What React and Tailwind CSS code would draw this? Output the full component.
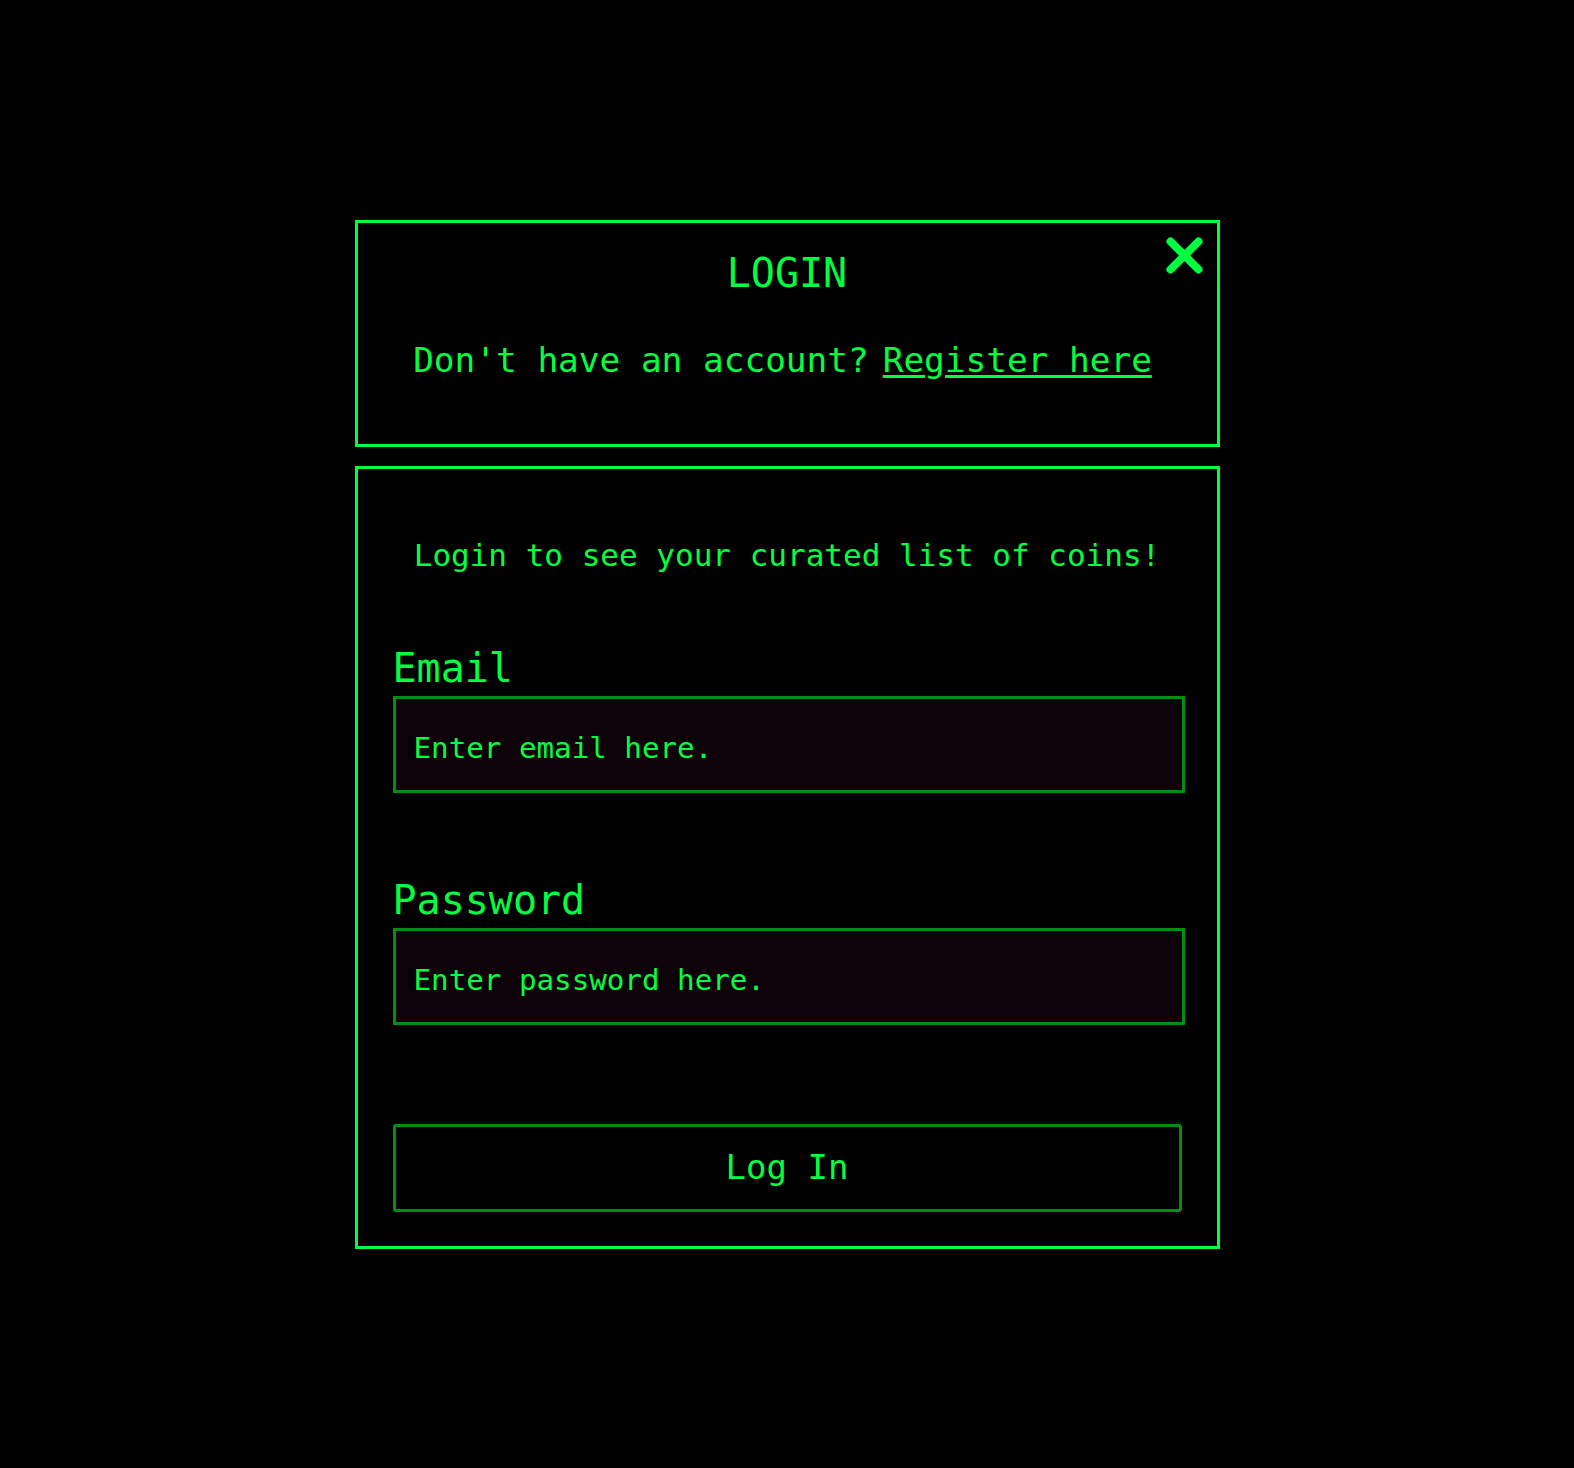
import { useState } from 'react'

const mono = { fontFamily: '"DejaVu Sans Mono", monospace' }

function CloseIcon() {
  return (
    <svg width="37" height="37" viewBox="0 0 37 37" fill="none">
      <path d="M4.5 4.5 L32.5 32.5 M32.5 4.5 L4.5 32.5" stroke="#00FF41" strokeWidth="8" strokeLinecap="round" />
    </svg>
  )
}

function Field({ label, type, placeholder, value, onChange }) {
  return (
    <div className="flex flex-col">
      <label className="text-[40px] leading-[48px] text-[#00FF41]">{label}</label>
      <input
        type={type}
        value={value}
        onChange={(e) => onChange(e.target.value)}
        placeholder={placeholder}
        className="mt-[4px] h-[97px] w-[792px] border-[3px] border-[#008F11] bg-[#0D0208] pt-[7px] pl-[18px] text-[29.2px] text-[#00FF41] outline-none placeholder:text-[#00FF41]"
        style={mono}
      />
    </div>
  )
}

export default function App() {
  const [email, setEmail] = useState('')
  const [password, setPassword] = useState('')

  return (
    <div className="flex min-h-screen flex-col items-center justify-center bg-black" style={mono}>
      <div className="relative flex w-[865px] flex-col items-center border-[3px] border-[#00FF41] pt-[26px] pb-[63px]">
        <button className="absolute top-[14px] right-[14px]">
          <CloseIcon />
        </button>
        <h1 className="text-[40px] leading-[48px] text-[#00FF41]">LOGIN</h1>
        <p className="mt-[42px] flex gap-[14px] pr-[9px] text-[34.4px] leading-[42px] text-[#00FF41]">
          <span>Don't have an account?</span>
          <a href="#" className="underline decoration-[3px] underline-offset-[3px]">Register here</a>
        </p>
      </div>

      <div className="mt-[19px] flex w-[865px] flex-col border-[3px] border-[#00FF41] pt-[68px] pb-[34px] pl-[35px]">
        <p className="pr-[35px] text-center text-[31px] leading-[37px] text-[#00FF41]">
          Login to see your curated list of coins!
        </p>
        <div className="mt-[70px]">
          <Field label="Email" type="email" placeholder="Enter email here." value={email} onChange={setEmail} />
        </div>
        <div className="mt-[83px]">
          <Field label="Password" type="password" placeholder="Enter password here." value={password} onChange={setPassword} />
        </div>
        <button className="mt-[99px] h-[88px] w-[789px] rounded-[3px] border-[3px] border-[#008F11] bg-black text-[34px] text-[#00FF41]">
          Log In
        </button>
      </div>
    </div>
  )
}
